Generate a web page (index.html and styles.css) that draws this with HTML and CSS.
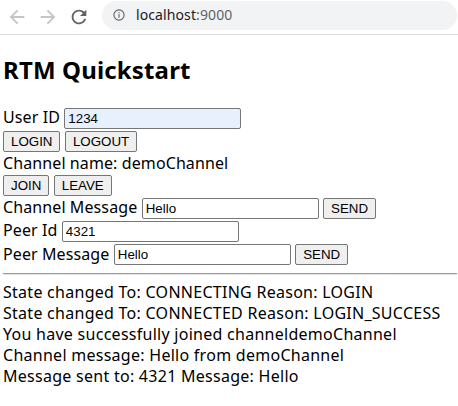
FILE: index.html
```html
<!DOCTYPE html>
<html>
<head>
<meta charset="utf-8">
<title>RTM Quickstart</title>
<link rel="stylesheet" href="styles.css">
</head>
<body>
<header class="toolbar">
  <span class="nav-btn disabled" aria-label="Back">
    <svg viewBox="0 0 24 24" width="22" height="22"><path d="M20 11H7.83l5.59-5.59L12 4l-8 8 8 8 1.41-1.41L7.83 13H20v-2z"/></svg>
  </span>
  <span class="nav-btn disabled" aria-label="Forward">
    <svg viewBox="0 0 24 24" width="22" height="22"><path d="M4 11h12.17l-5.59-5.59L12 4l8 8-8 8-1.41-1.41L16.17 13H4v-2z"/></svg>
  </span>
  <span class="nav-btn" aria-label="Reload">
    <svg viewBox="0 0 24 24" width="22" height="22"><path d="M17.65 6.35C16.2 4.9 14.21 4 12 4c-4.42 0-7.99 3.58-7.99 8s3.57 8 7.99 8c3.73 0 6.84-2.55 7.73-6h-2.08c-.82 2.33-3.04 4-5.65 4-3.31 0-6-2.690-6-6s2.69-6 6-6c1.66 0 3.14.69 4.22 1.78L13 11h7V4l-2.35 2.35z"/></svg>
  </span>
  <div class="omnibox">
    <svg class="info" viewBox="0 0 12 12" width="12" height="12"><circle cx="6" cy="6" r="5.1" fill="none" stroke="#5f6368" stroke-width="1.1"/><rect x="5.45" y="5.1" width="1.1" height="3.6" fill="#5f6368"/><rect x="5.45" y="3.2" width="1.1" height="1.1" fill="#5f6368"/></svg>
    <span class="url"><span class="host">localhost</span><span class="port">:9000</span></span>
  </div>
</header>
<main class="page">
  <h2 class="title">RTM Quickstart</h2>
  <div class="row row-field"><span class="label">User ID</span><input class="field autofill" type="text" value="1234"></div>
  <div class="row row-buttons"><button class="btn">LOGIN</button><button class="btn">LOGOUT</button></div>
  <div class="row row-text"><span class="label">Channel name: demoChannel</span></div>
  <div class="row row-buttons"><button class="btn">JOIN</button><button class="btn">LEAVE</button></div>
  <div class="row row-field"><span class="label">Channel Message</span><input class="field" type="text" value="Hello"><button class="btn">SEND</button></div>
  <div class="row row-field"><span class="label">Peer Id</span><input class="field" type="text" value="4321"></div>
  <div class="row row-field"><span class="label">Peer Message</span><input class="field" type="text" value="Hello"><button class="btn">SEND</button></div>
  <hr class="divider">
  <div class="log">
    <div>State changed To: CONNECTING Reason: LOGIN</div>
    <div>State changed To: CONNECTED Reason: LOGIN_SUCCESS</div>
    <div>You have successfully joined channeldemoChannel</div>
    <div>Channel message: Hello from demoChannel</div>
    <div>Message sent to: 4321 Message: Hello</div>
  </div>
</main>
</body>
</html>
```
FILE: styles.css
```css
html, body {
  margin: 0;
  padding: 0;
  background: #fff;
}
body {
  font-family: "Noto Sans", "Open Sans", sans-serif;
  color: #000;
}
.toolbar {
  display: flex;
  align-items: center;
  height: 34px;
  border-bottom: 1px solid #dadce0;
  padding-left: 6px;
  padding-right: 1px;
}
.nav-btn {
  display: flex;
  align-items: center;
  justify-content: center;
  width: 22px;
  height: 22px;
  margin-right: 9px;
  fill: #5f6368;
}
.nav-btn.disabled {
  fill: #c3c5c8;
}
.omnibox {
  flex: 1;
  display: flex;
  align-items: center;
  height: 29px;
  margin-left: 3px;
  margin-bottom: 4px;
  border-radius: 15px;
  background: #f1f3f4;
  padding-left: 11px;
}
.info {
  margin-right: 11px;
}
.url {
  font-size: 14px;
  letter-spacing: 0.1px;
  color: #202124;
  line-height: 20px;
}
.port {
  color: #5f6368;
}
.page {
  margin: 0 1px 0 3px;
  font-size: 16px;
  line-height: 21.4px;
  white-space: nowrap;
}
.title {
  font-size: 24px;
  font-weight: 700;
  line-height: 32px;
  letter-spacing: 0.15px;
  margin: 18.5px 0 21.5px;
}
.row {
  display: flex;
  align-items: center;
  gap: 4.4px;
  letter-spacing: 0.1px;
}
.row-field {
  height: 23.2px;
}
.row-buttons {
  height: 22.3px;
}
.row-text {
  height: 22px;
}
.label {
  margin-bottom: 1px;
}
.row-text .label {
  margin-bottom: 0;
}
.field {
  font-family: "Liberation Sans", Arial, sans-serif;
  font-size: 13.33px;
  letter-spacing: normal;
  color: #000;
  width: 177px;
  height: 21px;
  box-sizing: border-box;
  border: 1px solid #767676;
  border-radius: 2px;
  padding: 0 3px;
  margin: 0;
  background: #fff;
  outline: none;
  flex: none;
}
.field.autofill {
  background: #e8f0fe;
}
.btn {
  font-family: "Liberation Sans", Arial, sans-serif;
  font-size: 13.33px;
  letter-spacing: normal;
  color: #000;
  line-height: normal;
  height: 21px;
  box-sizing: border-box;
  background: #efefef;
  border: 1px solid #767676;
  border-radius: 2px;
  padding: 0 7px;
  margin: 0;
  flex: none;
}
.divider {
  border: 0;
  border-top: 1px solid #9a9a9a;
  border-bottom: 1px solid #e4e4e4;
  height: 0;
  margin: 6.9px 0 0;
}
.log {
  margin-top: 7.1px;
  line-height: 21px;
  letter-spacing: 0.27px;
}
```
